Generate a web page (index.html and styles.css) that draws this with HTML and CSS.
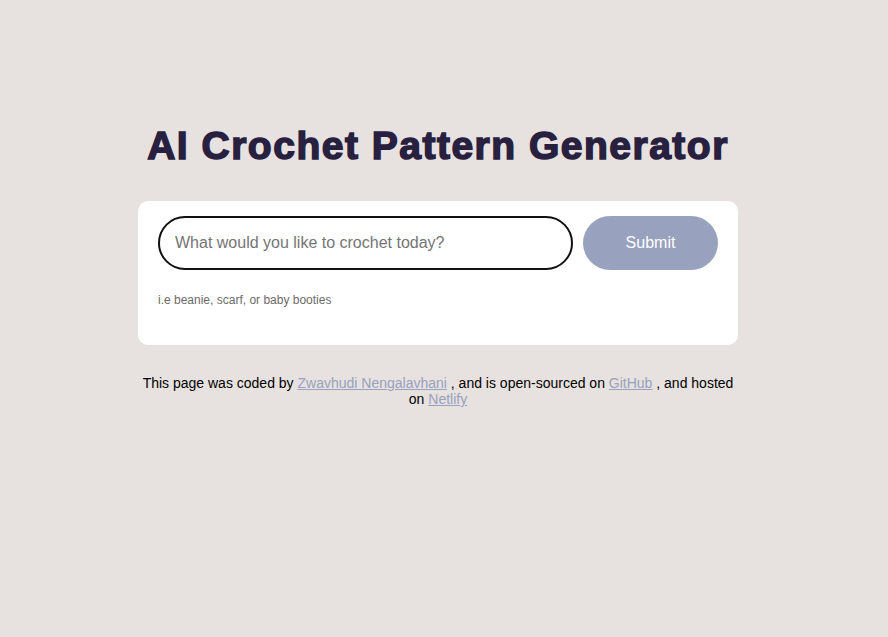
FILE: index.html
```html
<!DOCTYPE html>
<html>
<head>
<meta charset="utf-8">
<link rel="stylesheet" href="styles.css">
<title>AI Crochet Pattern Generator</title>
</head>
<body>
<div class="page">
  <main class="container">
    <h1 class="title">AI Crochet Pattern Generator</h1>
    <section class="card">
      <form class="form">
        <input class="field" type="text" placeholder="What would you like to crochet today?">
        <button class="submit" type="button">Submit</button>
      </form>
      <p class="hint">i.e beanie, scarf, or baby booties</p>
    </section>
    <footer class="footer">
      This page was coded by <a href="#">Zwavhudi Nengalavhani</a> , and is open-sourced on <a href="#">GitHub</a> , and hosted on <a href="#">Netlify</a>
    </footer>
  </main>
</div>
</body>
</html>
```
FILE: styles.css
```css
html, body {
  margin: 0;
  padding: 0;
  background: #e7e2df;
}
body {
  font-family: "Liberation Sans", Arial, sans-serif;
}
.page {
  padding-right: 12px;
}
.container {
  width: 600px;
  margin: 0 auto;
  padding-top: 122px;
}
.title {
  margin: 0;
  text-align: center;
  white-space: nowrap;
  font-family: "Liberation Sans", Arial, sans-serif;
  font-weight: 700;
  font-size: 39px;
  line-height: 48px;
  letter-spacing: 1.5px;
  color: #28203f;
  -webkit-text-stroke: 1.5px #28203f;
}
.card {
  margin-top: 31px;
  background: #fff;
  border-radius: 10px;
  padding: 15px 20px 38px;
}
.form {
  display: flex;
  gap: 10px;
  margin: 0;
}
.field {
  flex: 1;
  height: 54px;
  box-sizing: border-box;
  border: 2px solid #111;
  border-radius: 27px;
  padding: 0 15px;
  font-family: "Liberation Sans", Arial, sans-serif;
  font-size: 16px;
  color: #333;
  background: #fff;
  outline: none;
}
.field::placeholder {
  color: #757575;
}
.submit {
  width: 135px;
  height: 54px;
  border: none;
  border-radius: 27px;
  background: #98a1bd;
  color: #fff;
  font-family: "Liberation Sans", Arial, sans-serif;
  font-size: 16px;
}
.hint {
  margin: 23px 0 0;
  font-size: 12px;
  line-height: 14px;
  color: #6b6b6b;
}
.footer {
  margin-top: 30px;
  text-align: center;
  font-size: 14px;
  line-height: 16px;
  color: #000;
}
.footer a {
  color: #98a1bd;
  text-decoration: underline;
}
```
